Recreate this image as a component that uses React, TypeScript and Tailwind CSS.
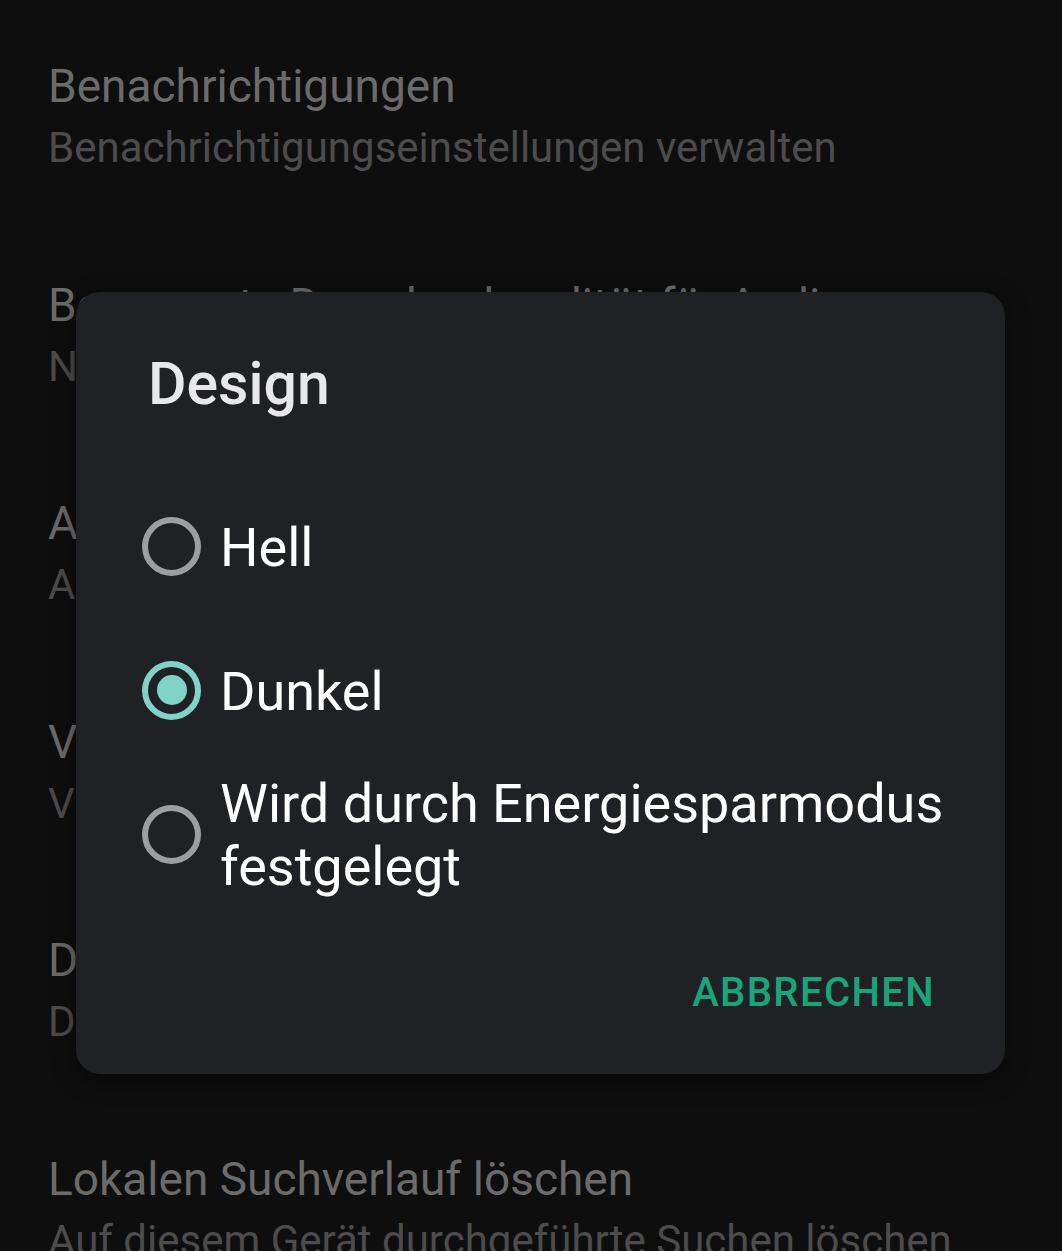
import React from "react";

const items = [
  { t: "Benachrichtigungen", s: "Benachrichtigungseinstellungen verwalten" },
  { t: "Bevorzugte Downloadqualität für Audio", s: "Normal" },
  { t: "Automatische Downloads", s: "Aus" },
  { t: "Videoqualität", s: "Videoqualität festlegen" },
  { t: "Design", s: "Dunkel" },
  { t: "Lokalen Suchverlauf löschen", s: "Auf diesem Gerät durchgeführte Suchen löschen" },
];

function Radio({ checked }: { checked: boolean }) {
  return (
    <div
      className={
        checked
          ? "w-[59px] h-[59px] shrink-0 rounded-full border-[6px] border-[#80d3c7] flex items-center justify-center"
          : "w-[59px] h-[59px] shrink-0 rounded-full border-[6px] border-[#9d9ea2]"
      }
    >
      {checked && <div className="w-[30px] h-[30px] rounded-full bg-[#80d3c7]" />}
    </div>
  );
}

export default function App() {
  const options = [
    { label: ["Hell"], checked: false },
    { label: ["Dunkel"], checked: true },
    { label: ["Wird durch Energiesparmodus", "festgelegt"], checked: false },
  ];
  return (
    <div className="relative w-[1062px] h-[1251px] overflow-hidden bg-[#0e0e0e] [font-family:Roboto,sans-serif]">
      <div className="pt-[9px] pl-[48px]">
        {items.map((it, i) => (
          <div key={i} className="pt-[47px] pb-[47.5px]">
            <div className="text-[46px] leading-[60px] text-[#6b6b6b] whitespace-nowrap">{it.t}</div>
            <div className="text-[42px] leading-[64px] text-[#4c4c4c] whitespace-nowrap">{it.s}</div>
          </div>
        ))}
      </div>

      <div className="absolute left-[76px] top-[292px] w-[929px] h-[782px] rounded-[24px] bg-[#202124] shadow-[0_6px_24px_rgba(0,0,0,0.45)] pt-[57px]">
        <div className="pl-[72px] text-[59px] leading-[69px] font-medium text-[#e8e8ea]">Design</div>
        <div className="mt-[56px] pl-[66px]">
          {options.map((o, i) => (
            <div key={i} className="h-[144px] flex items-center gap-[19px]">
              <Radio checked={o.checked} />
              <div className="text-[54px] leading-[63px] text-white pt-[2px]">
                {o.label.map((l, j) => (
                  <div key={j} className="whitespace-nowrap">{l}</div>
                ))}
              </div>
            </div>
          ))}
        </div>
        <div className="mt-[63px] flex justify-end pr-[70px]">
          <div className="text-[40px] leading-[48px] font-medium tracking-[1.4px] text-[#19a57b]">ABBRECHEN</div>
        </div>
      </div>
    </div>
  );
}
